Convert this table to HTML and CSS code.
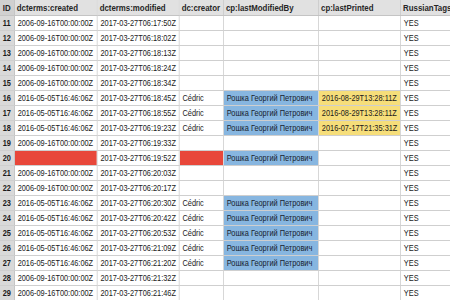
FILE: index.html
```html
<!DOCTYPE html>
<html>
<head>
<meta charset="utf-8">
<link rel="stylesheet" href="styles.css">
</head>
<body>
<div class="viewport">
<table class="sheet">
  <colgroup>
    <col class="c-id"><col class="c-created"><col class="c-modified"><col class="c-creator"><col class="c-by"><col class="c-printed"><col class="c-tags">
  </colgroup>
  <thead>
    <tr><th class="id">ID</th><th>dcterms:created</th><th>dcterms:modified</th><th>dc:creator</th><th>cp:lastModifiedBy</th><th>cp:lastPrinted</th><th>RussianTags</th></tr>
  </thead>
  <tbody>
    <tr><td class="id">11</td><td>2006-09-16T00:00:00Z</td><td>2017-03-27T06:17:50Z</td><td></td><td></td><td></td><td>YES</td></tr>
    <tr><td class="id">12</td><td>2006-09-16T00:00:00Z</td><td>2017-03-27T06:18:02Z</td><td></td><td></td><td></td><td>YES</td></tr>
    <tr><td class="id">13</td><td>2006-09-16T00:00:00Z</td><td>2017-03-27T06:18:13Z</td><td></td><td></td><td></td><td>YES</td></tr>
    <tr><td class="id">14</td><td>2006-09-16T00:00:00Z</td><td>2017-03-27T06:18:24Z</td><td></td><td></td><td></td><td>YES</td></tr>
    <tr><td class="id">15</td><td>2006-09-16T00:00:00Z</td><td>2017-03-27T06:18:34Z</td><td></td><td></td><td></td><td>YES</td></tr>
    <tr><td class="id">16</td><td>2016-05-05T16:46:06Z</td><td>2017-03-27T06:18:45Z</td><td>Cédric</td><td class="blue">Рошка Георгий Петрович</td><td class="yellow">2016-08-29T13:28:11Z</td><td>YES</td></tr>
    <tr><td class="id">17</td><td>2016-05-05T16:46:06Z</td><td>2017-03-27T06:18:55Z</td><td>Cédric</td><td class="blue">Рошка Георгий Петрович</td><td class="yellow">2016-08-29T13:28:11Z</td><td>YES</td></tr>
    <tr><td class="id">18</td><td>2016-05-05T16:46:06Z</td><td>2017-03-27T06:19:23Z</td><td>Cédric</td><td class="blue">Рошка Георгий Петрович</td><td class="yellow">2016-07-17T21:35:31Z</td><td>YES</td></tr>
    <tr><td class="id">19</td><td>2006-09-16T00:00:00Z</td><td>2017-03-27T06:19:33Z</td><td></td><td></td><td></td><td>YES</td></tr>
    <tr><td class="id">20</td><td class="red"></td><td>2017-03-27T06:19:52Z</td><td class="red"></td><td class="blue">Рошка Георгий Петрович</td><td></td><td>YES</td></tr>
    <tr><td class="id">21</td><td>2006-09-16T00:00:00Z</td><td>2017-03-27T06:20:03Z</td><td></td><td></td><td></td><td>YES</td></tr>
    <tr><td class="id">22</td><td>2006-09-16T00:00:00Z</td><td>2017-03-27T06:20:17Z</td><td></td><td></td><td></td><td>YES</td></tr>
    <tr><td class="id">23</td><td>2016-05-05T16:46:06Z</td><td>2017-03-27T06:20:30Z</td><td>Cédric</td><td class="blue">Рошка Георгий Петрович</td><td></td><td>YES</td></tr>
    <tr><td class="id">24</td><td>2016-05-05T16:46:06Z</td><td>2017-03-27T06:20:42Z</td><td>Cédric</td><td class="blue">Рошка Георгий Петрович</td><td></td><td>YES</td></tr>
    <tr><td class="id">25</td><td>2016-05-05T16:46:06Z</td><td>2017-03-27T06:20:53Z</td><td>Cédric</td><td class="blue">Рошка Георгий Петрович</td><td></td><td>YES</td></tr>
    <tr><td class="id">26</td><td>2016-05-05T16:46:06Z</td><td>2017-03-27T06:21:09Z</td><td>Cédric</td><td class="blue">Рошка Георгий Петрович</td><td></td><td>YES</td></tr>
    <tr><td class="id">27</td><td>2016-05-05T16:46:06Z</td><td>2017-03-27T06:21:20Z</td><td>Cédric</td><td class="blue">Рошка Георгий Петрович</td><td></td><td>YES</td></tr>
    <tr><td class="id">28</td><td>2006-09-16T00:00:00Z</td><td>2017-03-27T06:21:32Z</td><td></td><td></td><td></td><td>YES</td></tr>
    <tr><td class="id">29</td><td>2006-09-16T00:00:00Z</td><td>2017-03-27T06:21:46Z</td><td></td><td></td><td></td><td>YES</td></tr>
  </tbody>
</table>
</div>
</body>
</html>
```
FILE: styles.css
```css
html, body {
  margin: 0;
  padding: 0;
  background: #ffffff;
  overflow: hidden;
}
.viewport {
  width: 450px;
  height: 300px;
  overflow: hidden;
}
.sheet {
  border-collapse: collapse;
  table-layout: fixed;
  width: 568px;
  transform: scaleX(0.82);
  transform-origin: 0 0;
  font-family: "Liberation Sans", Arial, sans-serif;
  font-size: 9px;
  color: #1a1a1a;
}
.c-id { width: 17px; }
.c-created { width: 101px; }
.c-modified { width: 100px; }
.c-creator { width: 54px; }
.c-by { width: 116px; }
.c-printed { width: 100px; }
.c-tags { width: 80px; }
.sheet th, .sheet td {
  border: 1px solid #cfcfcf;
  padding: 0 0 0 4px;
  height: 14px;
  line-height: 14px;
  white-space: nowrap;
  overflow: hidden;
  text-align: left;
}
.sheet thead th {
  height: 15px;
  line-height: 15px;
  padding-left: 3px;
  background: #e1e1e1;
  font-weight: bold;
  font-size: 9.6px;
  color: #262626;
  border-color: #c4c4c4;
  border-top: none;
}
.sheet .id {
  background: #d9d9d9;
  font-weight: bold;
  text-align: center;
  padding: 0;
  border-left: none;
  border-right-color: #b5b5b5;
}
.sheet thead th.id {
  background: #d0d0d0;
  padding: 0;
}
.sheet .blue {
  background: #87b6e0;
  color: #17222e;
}
.sheet .yellow {
  background: #f6de7a;
}
.sheet .red {
  background: #e8473a;
}
```
